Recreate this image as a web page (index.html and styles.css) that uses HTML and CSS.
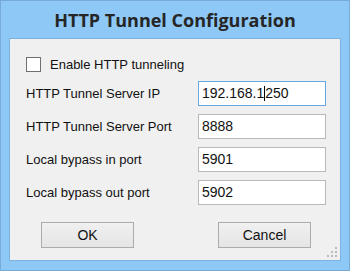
FILE: index.html
```html
<!DOCTYPE html>
<html lang="en">
  <head>
    <meta charset="UTF-8" />
    <title>HTTP Tunnel Configuration</title>
    <link rel="stylesheet" href="styles.css">
  </head>
  <body>
    <div class="window">
      <div class="title">HTTP Tunnel Configuration</div>
      <div class="client">
        <label class="check">
          <span class="box"></span>
          Enable HTTP tunneling
        </label>
        <div class="row">
          <span class="label">HTTP Tunnel Server IP</span>
          <div class="field focused">192.168.1<span class="caret"></span>250</div>
        </div>
        <div class="row">
          <span class="label">HTTP Tunnel Server Port</span>
          <div class="field">8888</div>
        </div>
        <div class="row">
          <span class="label">Local bypass in port</span>
          <div class="field">5901</div>
        </div>
        <div class="row">
          <span class="label">Local bypass out port</span>
          <div class="field">5902</div>
        </div>
        <div class="buttons">
          <button>OK</button>
          <button>Cancel</button>
        </div>
        <svg class="grip" width="10" height="10" viewBox="0 0 10 10">
          <rect x="8" y="0" width="2" height="2" fill="#b9b9b9"/>
          <rect x="4" y="4" width="2" height="2" fill="#b9b9b9"/>
          <rect x="8" y="4" width="2" height="2" fill="#b9b9b9"/>
          <rect x="0" y="8" width="2" height="2" fill="#b9b9b9"/>
          <rect x="4" y="8" width="2" height="2" fill="#b9b9b9"/>
          <rect x="8" y="8" width="2" height="2" fill="#b9b9b9"/>
        </svg>
      </div>
    </div>
  </body>
</html>
```

FILE: styles.css
```css
body{
  margin: 0;
  font-family: "Liberation Sans", Arial, sans-serif;
}
.window{
  width: 350px;
  height: 271px;
  box-sizing: border-box;
  border: 1px solid #78aad8;
  background: #8ec8f6;
  padding: 0 8px 8px 8px;
}
.title{
  height: 37px;
  line-height: 38px;
  text-align: center;
  font-family: "Open Sans", sans-serif;
  font-weight: bold;
  font-size: 18px;
  color: #262626;
}
.client{
  position: relative;
  height: 223px;
  box-sizing: border-box;
  border: 1px solid #7db2e0;
  background: #f0f0f0;
  padding: 17px 14px 0 16px;
  font-size: 13px;
  color: #111;
}
.check{
  display: flex;
  align-items: center;
  gap: 9px;
  height: 17px;
  margin-bottom: 8px;
}
.box{
  width: 13px;
  height: 13px;
  border: 1px solid #707070;
  background: #fff;
}
.row{
  display: flex;
  justify-content: space-between;
  align-items: center;
  height: 25px;
  margin-bottom: 8px;
}
.field{
  width: 128px;
  height: 25px;
  box-sizing: border-box;
  border: 1px solid #b9b9b9;
  background: #fff;
  padding: 0 3px;
  line-height: 23px;
  font-size: 14px;
}
.focused{
  border-color: #6aa7e2;
}
.caret{
  display: inline-block;
  width: 1px;
  height: 15px;
  background: #000;
  vertical-align: -3px;
}
.buttons{
  display: flex;
  justify-content: space-between;
  padding: 9px 15px 0 15px;
}
button{
  width: 93px;
  height: 26px;
  border: 1px solid #acacac;
  background: linear-gradient(#f0f0f0, #e5e5e5);
  font-family: "Liberation Sans", Arial, sans-serif;
  font-size: 14px;
  color: #111;
}
.grip{
  position: absolute;
  right: 3px;
  bottom: 3px;
}
```
